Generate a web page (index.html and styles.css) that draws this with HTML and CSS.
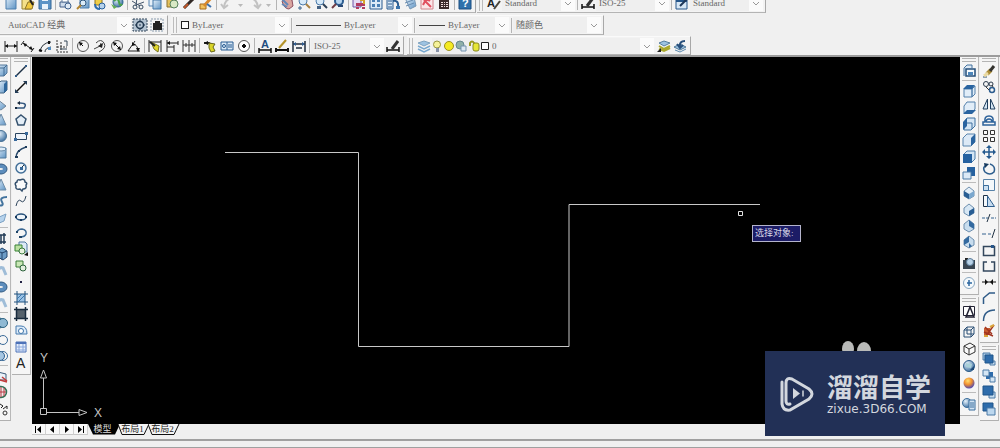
FILE: index.html
```html
<!DOCTYPE html>
<html lang="zh-CN">
<head>
<meta charset="utf-8">
<title>AutoCAD 经典</title>
<link rel="stylesheet" href="styles.css">
</head>
<body>
<svg class="defs" aria-hidden="true">
<defs>
<linearGradient id="gb" x1="0" y1="0" x2="1" y2="1"><stop offset="0" stop-color="#e4f0fa"/><stop offset="1" stop-color="#5d93c4"/></linearGradient>
<linearGradient id="gd" x1="0" y1="0" x2="1" y2="1"><stop offset="0" stop-color="#5f9acb"/><stop offset="1" stop-color="#1d4f83"/></linearGradient>
<radialGradient id="go" cx=".4" cy=".3" r=".7"><stop offset="0" stop-color="#ffe070"/><stop offset=".5" stop-color="#f09030"/><stop offset="1" stop-color="#5048b0"/></radialGradient>
<radialGradient id="gs" cx=".35" cy=".3" r=".8"><stop offset="0" stop-color="#e6f2fb"/><stop offset="1" stop-color="#30669a"/></radialGradient>
<!-- standard toolbar -->
<g id="new"><path d="M3 1h10v13H3z" fill="url(#gb)" stroke="#4d7fae"/></g>
<g id="open"><path d="M2 4h9v10H2z" fill="#f4e08a" stroke="#9a8430"/><path d="M5 14l3-7h6l-2 7z" fill="#f0c840" stroke="#8b7325"/><path d="M10 5l3 5" stroke="#222" stroke-width="2"/></g>
<g id="save"><path d="M2 1h12v13H2z" fill="#5b93c6" stroke="#356796"/><path d="M5 9h6v5H5zM5 2h6v4H5z" fill="#e9f2fa"/></g>
<g id="plot"><path d="M2 7h9v5H2z" fill="#cfdcec" stroke="#44608a"/><circle cx="10" cy="11" r="3" fill="#dfe9f4" stroke="#3d5f8c"/><path d="M4 3h6v4H4z" fill="#fff" stroke="#607a9c"/></g>
<g id="preview"><path d="M5 2h9v11H5z" fill="url(#gb)" stroke="#4d7fae"/><circle cx="8" cy="8" r="3" fill="#dcecf8" stroke="#31587f"/><path d="M6 10l-4 4" stroke="#b48530" stroke-width="2"/></g>
<g id="publish"><path d="M3 4h7v6H3z" fill="#f0cf48" stroke="#8c7424"/><circle cx="10" cy="11" r="3" fill="#b8d3ec" stroke="#28609c"/><path d="M3 9q0 5 5 5" fill="none" stroke="#2e6db0" stroke-width="2"/></g>
<g id="globe"><circle cx="9" cy="7" r="5" fill="url(#gs)" stroke="#2e6490"/><path d="M5 6q4-4 5 1t3 2" fill="none" stroke="#49a24a" stroke-width="2"/><path d="M2 9l3 5 3-2" fill="#63ad54"/></g>
<g id="cut"><path d="M2 6l8 5M14 7l-8 3M7 2l-1 9" stroke="#44566c" fill="none"/><circle cx="5" cy="12" r="2" fill="none" stroke="#33485f"/><circle cx="11" cy="12" r="2" fill="none" stroke="#33485f"/></g>
<g id="copyc"><path d="M2 2h8v9H2z" fill="#e6f0f9" stroke="#5884b0"/><path d="M6 5h8v9H6z" fill="url(#gb)" stroke="#4578a8"/></g>
<g id="paste"><path d="M3 3h9v9H3z" fill="#e5c05c" stroke="#8a7030"/><circle cx="10" cy="9" r="4" fill="#d8e8c4" stroke="#56825c"/></g>
<g id="brush"><path d="M3 13l6-6 5-5" stroke="#312926" stroke-width="3"/><path d="M3 13l4-4" stroke="#c05628" stroke-width="2"/></g>
<g id="blockedit"><path d="M2 9h6v5H2z" fill="#f2c15c" stroke="#a56b1c"/><path d="M6 11l7-8" stroke="#d8892c" stroke-width="3"/><path d="M9 9l4 3" stroke="#3c70ac" stroke-width="2"/></g>
<g id="undo"><path d="M13 3Q6 4 5 12M2 9l3 4 4-3" fill="none" stroke="#c2c2c2" stroke-width="2"/></g>
<g id="redo"><path d="M3 3q7 1 8 9M14 9l-3 4-4-3" fill="none" stroke="#c2c2c2" stroke-width="2"/></g>
<g id="dd"><path d="M5 9h5l-2.500 3z" fill="#b9b9b9"/></g>
<g id="pan"><path d="M3 6q2 8 7 8l4-3-1-6-6-2z" fill="#d9a5a0" stroke="#8e5060"/><path d="M3 4l6 6M3 9l5 3" stroke="#6287b8" stroke-width="2"/></g>
<g id="zoomr"><circle cx="7" cy="6" r="4" fill="#d8eaf8" stroke="#4a7aaa"/><path d="M10 9l4 4" stroke="#a88040" stroke-width="2"/><path d="M2 13h4M4 11v4" stroke="#38638e"/></g>
<g id="zoomw"><circle cx="7" cy="6" r="4" fill="#d8eaf8" stroke="#4a7aaa"/><path d="M10 9l4 4" stroke="#2c3f55" stroke-width="2"/><path d="M4 11h4v3H4z" fill="#456384"/></g>
<g id="zoomp"><circle cx="9" cy="6" r="4" fill="#b7d5ef" stroke="#2f5f92" stroke-width="2"/><path d="M6 9l-4 4" stroke="#713c44" stroke-width="2"/><path d="M8 11h5" stroke="#2b4a74" stroke-width="2"/></g>
<g id="props"><path d="M2 3h8v9H2z" fill="#e4daf4" stroke="#6f58a8"/><path d="M5 8h9v3H5zM5 12h3v2H5zM11 12h3v2h-3z" fill="#b13c61"/><path d="M9 5h4v4" stroke="#d6a22c" fill="none" stroke-width="2"/></g>
<g id="dcenter"><path d="M2 2h12v12H2z" fill="#dceaf7" stroke="#2c5c90"/><path d="M4 4h3v3H4zM9 4h3v3H9zM4 9h3v3H4zM9 9h3v3H9z" fill="#4a7fb4"/></g>
<g id="palettes"><path d="M2 2h6v12H2z" fill="#d4e5f5" stroke="#2c5c90"/><path d="M3 6h4M3 9h4M3 12h4" stroke="#2c5c90"/><path d="M8 6q6-1 5 6" fill="none" stroke="#2b5c90" stroke-width="2"/><path d="M11 11h4v3h-4z" fill="#3a72aa"/></g>
<g id="sheet"><path d="M4 5l8-3 2 9-6 3z" fill="url(#gb)" stroke="#7897b4"/><path d="M3 8l8-3M4 11l8-3" stroke="#688cb0"/></g>
<g id="markup"><path d="M2 2h12v12H2z" fill="#fbe6e8" stroke="#d0848c"/><path d="M4 10q3-7 7-4M5 5l7 7" fill="none" stroke="#e05060" stroke-width="2"/></g>
<g id="calc"><path d="M3 1h10v13H3z" fill="#3d2e2e"/><path d="M5 7h2v1H5zM8 7h1v1H8zM10 7h2v1h-2zM5 9h2v1H5zM8 9h1v1H8zM10 9h2v1h-2zM5 11h2v1H5zM8 11h1v1H8zM10 11h2v1h-2z" fill="#f0dede"/><path d="M5 3h6v2H5z" fill="#a65050"/></g>
<g id="help"><path d="M2 1h12v13H2z" fill="#2e71ab" stroke="#1c4f80"/><text x="5" y="12" class="glyph white">?</text></g>
<g id="tstyle"><text x="1" y="12" class="glyph">A</text><path d="M8 14l6-8" stroke="#4a4438" stroke-width="2"/></g>
<g id="dstyle"><path d="M2 12h12M2 9v5M14 9v5" stroke="#111" stroke-width="1.500"/><path d="M7 11l6-8" stroke="#333" stroke-width="3"/></g>
<g id="tbstyle"><path d="M2 4h11v10H2z" fill="#d7e7f5" stroke="#26568a"/><path d="M2 6h11" stroke="#26568a" stroke-width="2"/><path d="M6 11l8-8" stroke="#1f3858" stroke-width="2"/></g>
<!-- workspace -->
<g id="gear"><path d="M1 2h14v12H1z" fill="#b5c4d2"/><path d="M1 2h14v12H1z" fill="none" stroke="#33465a" stroke-dasharray="2 1"/><circle cx="8" cy="8" r="3.500" fill="none" stroke="#20374e" stroke-width="1.500"/><path d="M8 3v2M8 11v2M3 8h2M11 8h2M7 8h2" stroke="#20374e"/></g>
<g id="wsave"><path d="M2 2h12v12H2z" fill="none" stroke="#899bad" stroke-dasharray="2 1"/><path d="M4 6h9v7H4zM6 4h5v3H6z" fill="#222"/></g>
<!-- dimensions -->
<g id="dlin"><path d="M2 3v11M14 3v11M2 8h12" stroke="#222" fill="none"/><path d="M2 8l3-2v4zM14 8l-3-2v4z" fill="#111"/></g>
<g id="dali"><path d="M3 5l10 7M1 7l3-4M11 14l3-4" stroke="#222"/><path d="M3 5l4 1-2 3zM13 12l-4-1 2-3z" fill="#111"/></g>
<g id="darc"><path d="M3 14q1-9 11-10M8 14q0-4 6-5" stroke="#29323a" fill="none"/><path d="M2 12l3 1M12 3v3" stroke="#111" stroke-width="2"/><path d="M11 9h3v3h-3z" fill="#538dc0"/></g>
<g id="dord"><path d="M3 2v12h11M7 4v9M3 9h10" stroke="#333" fill="none" stroke-dasharray="2 1"/><path d="M10 3h3v5M6 11h7" stroke="#345" fill="none"/></g>
<g id="drad"><circle cx="8" cy="8" r="5.500" fill="none" stroke="#555"/><path d="M8 8L4 4" stroke="#111"/><path d="M4 4l4 1-3 3z" fill="#111"/></g>
<g id="djog"><path d="M4 5q5-5 8 0t-5 9M2 11l6-3 1-3" stroke="#444" fill="none"/><path d="M6 8l5-3-1 5z" fill="#222"/></g>
<g id="ddia"><circle cx="8" cy="8" r="5.500" fill="none" stroke="#555"/><path d="M4 4l8 8" stroke="#111"/><path d="M4 4l4 1-3 3zM12 12l-4-1 3-3z" fill="#111"/></g>
<g id="dang"><path d="M14 13H2L9 3M7 6q5 1 5 7" stroke="#222" fill="none"/><path d="M6 4l4 3-4 1zM10 10l2 4 2-4z" fill="#111"/></g>
<g id="dqui"><path d="M2 2v12M14 2v12M2 4h12" stroke="#222"/><path d="M4 4l8 4-1 6-4-3z" fill="#e3d92a" stroke="#77711b"/><path d="M3 4l5 4" stroke="#222" stroke-width="2"/></g>
<g id="dbas"><path d="M3 2v12M3 5h11M3 9h7M14 3v4M10 7v7" stroke="#222"/><path d="M3 5l3-2v4z" fill="#111"/></g>
<g id="dcon"><path d="M2 2v12M8 2v12M14 2v12M2 7h12" stroke="#333"/><path d="M5 5v4M11 5v4" stroke="#333"/></g>
<g id="dled"><path d="M2 5h5l4 3" stroke="#222" stroke-width="2" fill="none"/><path d="M7 5l6 1-2 3 2 4-4 1-2-4z" fill="#d9d428" stroke="#66661a"/><path d="M2 5l4-2v4z" fill="#111"/></g>
<g id="dtol"><path d="M2 4h12v8H2zM8 4v8" fill="#d8e8f6" stroke="#285c92"/><circle cx="5" cy="8" r="1.500" fill="none" stroke="#24588f"/><path d="M10 10V6M12 6v4" stroke="#24588f"/></g>
<g id="dcen"><circle cx="8" cy="8" r="5.500" fill="#fff" stroke="#555"/><path d="M6 8h4M8 6v4" stroke="#111" stroke-width="2"/></g>
<g id="dedit"><text x="4" y="10" class="glyph blue">A</text><path d="M2 12h12M2 10v5M14 10v5" stroke="#111" stroke-width="1.500"/></g>
<g id="dtedit"><path d="M2 12h12M2 10v4M14 10v4" stroke="#111" stroke-width="2"/><path d="M5 10l7-8" stroke="#b39228" stroke-width="2"/></g>
<g id="dupd"><path d="M2 3v11M14 3v11M2 6h12M5 10h6" stroke="#202c3c" stroke-width="1.500"/><path d="M2 6l3-2v4zM14 6l-3-2v4z" fill="#315e91"/></g>
<!-- layers -->
<g id="layers"><path d="M2 5l6-2 6 2-6 3z" fill="#9dc3e2" stroke="#7fa3c0"/><path d="M2 8l6 3 6-3M2 11l6 3 6-3" fill="none" stroke="#78a8cf" stroke-width="1.500"/></g>
<g id="laycur"><path d="M4 5l5-2 6 2-6 3z" fill="#9dc3e2" stroke="#557f9f"/><path d="M4 8l5 3 6-3M4 11l5 2 6-3" fill="none" stroke="#aaa82c" stroke-width="2"/><path d="M2 14l4-4v4z" fill="#222"/></g>
<g id="layprev"><path d="M2 9l6-3 6 3-6 3z" fill="#9dc3e2" stroke="#4f7897"/><path d="M3 12l5 2 6-3" fill="none" stroke="#5b89ae"/><path d="M13 3q-6 0-5 6M5 6l3 4 3-3" stroke="#284f7b" stroke-width="2" fill="none"/></g>
<!-- drawing -->
<g id="line"><path d="M3 13L13 3" stroke="#1b2f45" stroke-width="1.500"/><path d="M2 12h2v2H2zM12 2h2v2h-2z" fill="#315b87"/></g>
<g id="xline"><path d="M3 13L13 3" stroke="#111" stroke-width="1.500"/><path d="M2 14v-4l4 4zM14 2v4l-4-4z" fill="#223c57"/></g>
<g id="pline"><path d="M3 12h8q4-5-4-5M3 12h2" stroke="#365980" stroke-width="1.500" fill="none"/><path d="M7 5v4L4 7zM2 11h2v2H2z" fill="#16283c"/></g>
<g id="poly"><path d="M8 3l5 4-2 6H5L3 7z" fill="#e4eef7" stroke="#36536f" stroke-width="1.500"/></g>
<g id="rect"><path d="M2.500 5.500h11v6h-11z" fill="#edf3fa" stroke="#29435f"/><path d="M12 4h3v3h-3zM1 10h3v3H1z" fill="#38699c"/></g>
<g id="arc"><path d="M3 14q0-8 10-11" stroke="#294a6c" fill="none" stroke-width="1.500"/><path d="M2 12h3v2H2zM12 2h2v2h-2zM5 6h2v2H5z" fill="#1e3b5a"/></g>
<g id="circle"><circle cx="8" cy="8" r="5" fill="#eef5fb" stroke="#426f98" stroke-width="1.500"/><path d="M8 8l3-3" stroke="#234"/><path d="M7 7h3v3H7z" fill="#37699a"/></g>
<g id="cloud"><path d="M4 5q0-3 3-2 5-2 5 2 3 1 1 3 1 4-3 4l-1 2-2-2q-5 1-4-3-2-3 1-4z" fill="#fafafa" stroke="#334f6c" stroke-width="1.500"/></g>
<g id="spline"><path d="M3 13q2-8 5-5t5-5" fill="none" stroke="#2c435a"/></g>
<g id="ell"><ellipse cx="8" cy="8" rx="5" ry="3" fill="#eff5fa" stroke="#29537c" stroke-width="1.500"/><path d="M2 7h2v2H2zM12 7h2v2h-2zM7 10h2v2H7z" fill="#1a3b5f"/></g>
<g id="ellarc"><path d="M4 7q1-3 5-3 5 1 4 5-1 3-6 3" fill="none" stroke="#3a6792" stroke-width="1.500"/><path d="M3 6h2v2H3zM6 11h3v2H6z" fill="#1e4467"/></g>
<g id="insert"><path d="M6 1h6l2 2v8H6z" fill="#dce9f6" stroke="#5079a0"/><path d="M2 4h7v6H2z" fill="#bce1a3" stroke="#398334"/><circle cx="9" cy="10" r="3" fill="#e8f2df" stroke="#3a7a3d"/><path d="M11 14l4-3v4z" fill="#111"/></g>
<g id="block"><path d="M3 3h7v6H3z" fill="#c9e7b6" stroke="#3a7d38"/><circle cx="10" cy="10" r="3" fill="#e3efdf" stroke="#2d633c"/></g>
<g id="point"><path d="M7 7h2v2H7z" fill="#224"/></g>
<g id="hatch"><path d="M4 4h8v8H4z" fill="#9bc2e5"/><path d="M4 1v14M12 1v14M1 4h14M1 12h14" stroke="#23527f"/><path d="M4 9l5-5M5 12l7-7" stroke="#3d78ad"/></g>
<g id="grad"><path d="M4 4h8v8H4z" fill="#55616b"/><path d="M3.500 1v14M12.500 1v14M1 3.500h14M1 12.500h14" stroke="#182b3d" stroke-width="1.500"/></g>
<g id="region"><path d="M3 12V4h5q6 0 6 8z" fill="#dceaf8" stroke="#477aae"/><circle cx="8" cy="9" r="2.500" fill="#fff" stroke="#3c73a9"/></g>
<g id="table"><path d="M3 3h10v10H3z" fill="#e6eefb" stroke="#4d72b8"/><path d="M3 4h10" stroke="#4d72b8" stroke-width="2"/><path d="M3 8h10M3 11h10M6 5v8M10 5v8" stroke="#8ba8dc"/></g>
<g id="mtext"><text x="3" y="13" class="letter">A</text></g>
<!-- solids -->
<g id="cube"><path d="M3 5l4-3h7v8l-3 3H3z" fill="url(#gb)" stroke="#55799b"/><path d="M3 5h8v8M11 5l3-3" fill="none" stroke="#426c94"/></g>
<g id="box"><path d="M5 5l3-3h6v9l-3 3H5z" fill="url(#gb)" stroke="#436787"/><path d="M11 5l3-3v9l-3 3z" fill="#2f679c"/></g>
<g id="wedge"><path d="M4 3l9 7-5 4-6-3z" fill="url(#gb)" stroke="#71869b"/></g>
<g id="cone"><path d="M8 2l5 11H4z" fill="url(#gb)" stroke="#6d8ba6"/></g>
<g id="sphere"><circle cx="8" cy="8" r="5.500" fill="url(#gs)" stroke="#4b7396"/></g>
<g id="cyl"><path d="M4 3h9v10H4z" fill="url(#gb)" stroke="#4f789d"/><ellipse cx="8" cy="4" rx="5" ry="2" fill="#dcebf8" stroke="#6287a8"/></g>
<g id="torus"><ellipse cx="8" cy="8" rx="6" ry="5" fill="#5d8dbc" stroke="#335b82"/><ellipse cx="8" cy="8" rx="2" ry="1" fill="#eee"/></g>
<g id="helix"><path d="M3 12q9 2 6-3t5-5" fill="none" stroke="#44749e" stroke-width="2"/></g>
<g id="plane"><path d="M4 8l9-4-2 7-7 3z" fill="#b7d3ec" stroke="#7ba0c3"/></g>
<g id="extr"><path d="M3 5h10M5 3v11M11 3v11M8 5v9M3 12h10" stroke="#223b55" stroke-width="1.500"/></g>
<g id="push"><path d="M5 5l4-3 5 3v6l-4 3-5-3z" fill="#6c9cc6" stroke="#26486e"/><path d="M9 6v8M5 5l4 2 5-2" fill="none" stroke="#26486e"/></g>
<g id="sweep"><path d="M3 12q2-9 7-7l3 7" fill="none" stroke="#9fbdd8" stroke-width="3"/></g>
<g id="union"><circle cx="6" cy="8" r="5" fill="#76a6c0" stroke="#2d6382"/><circle cx="10" cy="8" r="4.500" fill="#8fb9d4" stroke="#2d6382"/></g>
<g id="subt"><circle cx="5" cy="8" r="4.500" fill="#6b9cc4" stroke="#2d5a86"/><circle cx="10" cy="8" r="4.500" fill="#f5f5f5" stroke="#3a6a98"/></g>
<g id="inter"><circle cx="10" cy="8" r="4.500" fill="#f5f5f5" stroke="#3a6a98"/><circle cx="7" cy="8" r="4.500" fill="#a6c6e2" stroke="#2f608f"/></g>
<g id="rot3"><path d="M5 4l8 2v6H5z" fill="#e9f1f8" stroke="#3c5c7c"/><path d="M7 12l7 2M9 9l5 4" stroke="#c23a3a" stroke-width="1.500"/></g>
<g id="orb"><circle cx="8" cy="8" r="5.500" fill="#f1e8e8" stroke="#347055" stroke-width="1.500"/><path d="M8 3v10M3 8h10M11 4v8" stroke="#b63a45"/></g>
<g id="walk"><path d="M7 3l3 2-2 2M10 8l4-3v3" stroke="#222" fill="none"/><circle cx="12" cy="12" r="2" fill="none" stroke="#333"/></g>
<!-- views -->
<g id="named"><path d="M3 13V5l3-3h5v3" fill="#dce9f5" stroke="#44739f"/><path d="M5 6h9v7H5z" fill="#f6fafd" stroke="#234e79" stroke-width="1.500"/><path d="M7 9h5v3H7z" fill="#4c86bb"/></g>
<g id="vtop"><path d="M3 6h8v8H3zM11 6l3-3v8l-3 3z" fill="#e1edf8" stroke="#5481ac"/><path d="M2 6l4-4h8l-3 4z" fill="#2a64a0"/></g>
<g id="vbot"><path d="M3 6l3-4h8v7l-3 4H3z" fill="#e1edf8" stroke="#5481ac"/><path d="M2 14l4-4h9l-4 4z" fill="#2a64a0"/></g>
<g id="vleft"><path d="M3 6l3-4h8v8l-4 4H3z" fill="#d4e5f4" stroke="#3f719f"/><path d="M2 6l4-4v8l-4 4z" fill="#2a64a0"/><path d="M6 7h5v6" fill="none" stroke="#3f719f"/></g>
<g id="vright"><path d="M2 6l4-4h8v8l-4 4H2z" fill="#dce9f6" stroke="#5984ad"/><path d="M10 6l4-4v8l-4 4z" fill="#2a64a0"/></g>
<g id="vfront"><path d="M3 5l3-3h8v8l-3 3z" fill="#d4e5f4" stroke="#4e7eaa"/><path d="M2 5h9v9H2z" fill="#2561a0"/></g>
<g id="vback"><path d="M6 2h8v9H6z" fill="#2561a0"/><path d="M2 7h8v7H2z" fill="#dbe9f6" stroke="#4b7aa7"/></g>
<g id="isw"><path d="M8 2l5 4v5l-5 3-5-3V6z" fill="#e4eff8" stroke="#6e8fae"/><path d="M3 6l5 3v5l-5-3z" fill="#285d93"/><path d="M8 9l5-3v5l-5 3z" fill="#7ba8cf"/></g>
<g id="ise"><path d="M8 2l5 4v5l-5 3-5-3V6z" fill="#d7e7f4" stroke="#6e8fae"/><path d="M8 9l5-3v5l-5 3z" fill="#285d93"/></g>
<g id="ine"><path d="M8 2l5 4v5l-5 3-5-3V6z" fill="#c8ddee" stroke="#6e8fae"/><path d="M8 2l5 4v5l-5-3z" fill="#336aa0"/></g>
<g id="inw"><path d="M8 2l5 4v5l-5 3-5-3V6z" fill="#c8ddee" stroke="#6e8fae"/><path d="M8 2L3 6v5l5-3zM8 9l3 3-3 2z" fill="#336aa0"/></g>
<g id="cam"><path d="M2 5h12v9H2z" fill="#394652"/><path d="M4 3h3v2H4z" fill="#222"/><circle cx="9" cy="7" r="3.500" fill="#b9d3e8" stroke="#597996"/></g>
<g id="pivot"><circle cx="8" cy="8" r="5.500" fill="#f5fafd" stroke="#88a6bf"/><path d="M6 8h5M8 5v6" stroke="#2b67a0" stroke-width="1.500"/></g>
<g id="vs2d"><path d="M2.500 3.500h11v9h-11z" fill="#fff" stroke="#223"/><path d="M9 4l4 10H5z" fill="none" stroke="#223" stroke-width="1.500"/></g>
<g id="wire"><path d="M3 6h7v7H3zM6 3h7v7h-7zM3 6l3-3M10 6l3-3M10 13l3-3" fill="none" stroke="#294e75"/></g>
<g id="hid"><path d="M3 5l6-3 5 3v6l-6 3-5-3zM3 5l5 3 6-3M8 8v6" fill="#fafafa" stroke="#333"/></g>
<g id="real"><circle cx="8" cy="8" r="5.500" fill="url(#gs)" stroke="#2b5b88"/><path d="M5 5l6 1-1 4-5-1z" fill="#a9d0d8"/><path d="M9 12l4-4v4z" fill="#1e4a78"/></g>
<g id="concept"><circle cx="8" cy="8" r="5.500" fill="url(#go)"/></g>
<g id="vsman"><circle cx="6" cy="7" r="4.500" fill="url(#gs)" stroke="#3c6f9d"/><path d="M8 4h6v10H8z" fill="#d2e4f4" stroke="#3b6e9d"/><path d="M9 7h4M9 9h4M9 11h4" stroke="#3b6e9d"/></g>
<!-- modify -->
<g id="erase"><path d="M2 14h4" stroke="#2b4f76"/><path d="M6 11l4-4" stroke="#ab8c36" stroke-width="4"/><path d="M9 8l4-5" stroke="#34332f" stroke-width="3"/><path d="M3 13l4-3" stroke="#ead9a0" stroke-width="3"/></g>
<g id="copy"><circle cx="5" cy="5" r="2.500" fill="none" stroke="#2b3b4c"/><circle cx="10" cy="5" r="2" fill="none" stroke="#2b3b4c"/><circle cx="11" cy="11" r="2.500" fill="none" stroke="#2c5d8f" stroke-width="1.500"/><path d="M5 8l3 3M12 8l-1-2" stroke="#333"/></g>
<g id="mirror"><path d="M6.500 3v10H2zM9.500 3v10H14z" fill="#d6e7f5" stroke="#1f3e5d"/></g>
<g id="offset"><path d="M2 13h12v-3h-2q1-6-4-6T4 10H2zM5 10h6q0-3-3-3t-3 3" fill="none" stroke="#2e639b" stroke-width="1.500"/></g>
<g id="array"><path d="M2.500 2.500h4v4h-4zM9.500 2.500h4v4h-4zM2.500 9.500h4v4h-4zM9.500 9.500h4v4h-4z" fill="#fafafa" stroke="#333"/></g>
<g id="move"><path d="M8 3v10M3 8h10" stroke="#255a8e" stroke-width="1.500"/><path d="M8 1l3 3H5zM8 15l3-3H5zM1 8l3-3v6zM15 8l-3-3v6z" fill="#255a8e"/></g>
<g id="rotate"><path d="M5 4q-4 3-1 7 5 4 9 0 2-6-4-8" fill="none" stroke="#2d5e8e" stroke-width="1.500"/><path d="M3 2l5 1-4 4z" fill="#173b5e"/></g>
<g id="scale"><path d="M2.500 2.500h11v11h-11z" fill="#f4f8fb" stroke="#5782a8"/><path d="M2.500 8.500h5v5h-5z" fill="#cbdff0" stroke="#3b6d9c"/></g>
<g id="stretch"><path d="M2.500 13.500v-11h4v11z" fill="#f4f8fb" stroke="#1e3146"/><path d="M6.500 3l7 10.500h-7z" fill="#c6dcf0" stroke="#2f5f8f"/></g>
<g id="trim"><path d="M1 9h6M10 9h5" stroke="#35638f" stroke-dasharray="3 1"/><path d="M6 13l3-8" stroke="#234"/></g>
<g id="extend"><path d="M1 9h4M7 9h3" stroke="#35638f"/><path d="M11 13l3-9" stroke="#234"/></g>
<g id="breakp"><path d="M2.500 4.500h11v9h-11z" fill="#f5f5f5" stroke="#33475d" stroke-width="1.500"/><path d="M10 3h3v3h-3z" fill="#28568a"/></g>
<g id="break"><path d="M6 4H2.500v9h11V4H10" fill="none" stroke="#33475d" stroke-width="1.500"/></g>
<g id="join"><path d="M1 8h14" stroke="#111"/><path d="M7 8L4 5v6zM9 8l3-3v6z" fill="#111"/></g>
<g id="chamfer"><path d="M2.500 14V8l6-5H14" fill="none" stroke="#2f5b88" stroke-width="1.500"/></g>
<g id="fillet"><path d="M2.500 14q0-11 11.500-11" fill="none" stroke="#2f5b88" stroke-width="1.500"/></g>
<g id="explode"><path d="M3 5h6v7H3z" fill="#c85c30"/><path d="M5 13l8-11M3 9l9 4M4 4l7 7" stroke="#a03420" stroke-width="1.500"/><path d="M9 4l4-2M3 13h4" stroke="#d9a53c" stroke-width="2"/></g>
<g id="front"><path d="M2 2h7v7H2z" fill="#a9cae6" stroke="#4c7ba6"/><path d="M9 10h5v4H9z" fill="#c7ddef" stroke="#4c7ba6"/><path d="M4 4h8v8H4z" fill="#2e6cab" stroke="#1f548a"/></g>
<g id="back"><path d="M5 4h7v7H5z" fill="#2e6cab"/><path d="M2 2h6v6H2zM9 9h5v5H9z" fill="#d5e6f4" stroke="#4c7ba6"/></g>
<g id="above"><path d="M8 8h6v6H8z" fill="#c7ddef" stroke="#4c7ba6"/><path d="M2 2h10v9H2z" fill="#2e6cab" stroke="#1f548a"/></g>
<g id="under"><path d="M2 2h10v8H2z" fill="#2e6cab" stroke="#1f548a"/><path d="M6 7h8v7H6z" fill="#bcd7ee" stroke="#4c7ba6"/></g>
</defs>
</svg>

<header class="bars">
  <div class="row row-standard">
    <div class="bar" role="toolbar" aria-label="标准">
      <button class="b" aria-label="新建"><svg><use href="#new"/></svg></button>
      <button class="b" aria-label="打开"><svg><use href="#open"/></svg></button>
      <button class="b" aria-label="保存"><svg><use href="#save"/></svg></button>
      <i class="sep"></i>
      <button class="b" aria-label="打印"><svg><use href="#plot"/></svg></button>
      <button class="b" aria-label="打印预览"><svg><use href="#preview"/></svg></button>
      <button class="b" aria-label="发布"><svg><use href="#publish"/></svg></button>
      <button class="b" aria-label="三维DWF"><svg><use href="#globe"/></svg></button>
      <i class="sep"></i>
      <button class="b" aria-label="剪切"><svg><use href="#cut"/></svg></button>
      <button class="b" aria-label="复制"><svg><use href="#copyc"/></svg></button>
      <button class="b" aria-label="粘贴"><svg><use href="#paste"/></svg></button>
      <button class="b" aria-label="特性匹配"><svg><use href="#brush"/></svg></button>
      <button class="b" aria-label="块编辑器"><svg><use href="#blockedit"/></svg></button>
      <i class="sep"></i>
      <button class="b" aria-label="放弃"><svg><use href="#undo"/></svg></button>
      <button class="b slim" aria-label="放弃列表"><svg><use href="#dd"/></svg></button>
      <button class="b" aria-label="重做"><svg><use href="#redo"/></svg></button>
      <button class="b slim" aria-label="重做列表"><svg><use href="#dd"/></svg></button>
      <i class="sep"></i>
      <button class="b" aria-label="平移"><svg><use href="#pan"/></svg></button>
      <button class="b" aria-label="实时缩放"><svg><use href="#zoomr"/></svg></button>
      <button class="b" aria-label="窗口缩放"><svg><use href="#zoomw"/></svg></button>
      <button class="b" aria-label="缩放上一个"><svg><use href="#zoomp"/></svg></button>
      <i class="sep"></i>
      <button class="b" aria-label="特性"><svg><use href="#props"/></svg></button>
      <button class="b" aria-label="设计中心"><svg><use href="#dcenter"/></svg></button>
      <button class="b" aria-label="工具选项板"><svg><use href="#palettes"/></svg></button>
      <button class="b" aria-label="图纸集"><svg><use href="#sheet"/></svg></button>
      <button class="b" aria-label="标记集"><svg><use href="#markup"/></svg></button>
      <button class="b" aria-label="计算器"><svg><use href="#calc"/></svg></button>
      <i class="sep"></i>
      <button class="b" aria-label="帮助"><svg><use href="#help"/></svg></button>
    </div>
    <div class="bar" role="toolbar" aria-label="样式">
      <i class="grip"></i>
      <button class="b" aria-label="文字样式"><svg><use href="#tstyle"/></svg></button>
      <div class="combo w-style"><select aria-label="文字样式"><option>Standard</option></select><svg class="chev" viewBox="0 0 14 16"><path d="M4 7l3 3 3-3"/></svg></div>
      <i class="sep"></i>
      <button class="b" aria-label="标注样式"><svg><use href="#dstyle"/></svg></button>
      <div class="combo w-style"><select aria-label="标注样式"><option>ISO-25</option></select><svg class="chev" viewBox="0 0 14 16"><path d="M4 7l3 3 3-3"/></svg></div>
      <i class="sep"></i>
      <button class="b" aria-label="表格样式"><svg><use href="#tbstyle"/></svg></button>
      <div class="combo w-style"><select aria-label="表格样式"><option>Standard</option></select><svg class="chev" viewBox="0 0 14 16"><path d="M4 7l3 3 3-3"/></svg></div>
    </div>
  </div>

  <div class="row row-props">
    <div class="bar" role="toolbar" aria-label="工作空间">
      <div class="combo w-space"><select aria-label="工作空间"><option>AutoCAD 经典</option></select><svg class="chev" viewBox="0 0 14 16"><path d="M4 7l3 3 3-3"/></svg></div>
      <button class="b" aria-label="工作空间设置"><svg><use href="#gear"/></svg></button>
      <button class="b" aria-label="我的工作空间"><svg><use href="#wsave"/></svg></button>
    </div>
    <div class="bar" role="toolbar" aria-label="特性">
      <i class="grip"></i>
      <div class="combo w-color"><span class="swatch"></span><select aria-label="颜色"><option>ByLayer</option></select><svg class="chev" viewBox="0 0 14 16"><path d="M4 7l3 3 3-3"/></svg></div>
      <i class="sep"></i>
      <div class="combo w-ltype"><span class="dash"></span><select aria-label="线型"><option>ByLayer</option></select><svg class="chev" viewBox="0 0 14 16"><path d="M4 7l3 3 3-3"/></svg></div>
      <i class="sep"></i>
      <div class="combo w-weight"><span class="dash short"></span><select aria-label="线宽"><option>ByLayer</option></select><svg class="chev" viewBox="0 0 14 16"><path d="M4 7l3 3 3-3"/></svg></div>
      <i class="sep"></i>
      <div class="combo w-plot"><select aria-label="打印样式"><option>随颜色</option></select><svg class="chev" viewBox="0 0 14 16"><path d="M4 7l3 3 3-3"/></svg></div>
    </div>
  </div>

  <div class="row row-dim">
    <div class="bar" role="toolbar" aria-label="标注">
      <button class="b" aria-label="线性"><svg><use href="#dlin"/></svg></button>
      <button class="b" aria-label="对齐"><svg><use href="#dali"/></svg></button>
      <button class="b" aria-label="弧长"><svg><use href="#darc"/></svg></button>
      <button class="b" aria-label="坐标"><svg><use href="#dord"/></svg></button>
      <i class="sep"></i>
      <button class="b" aria-label="半径"><svg><use href="#drad"/></svg></button>
      <button class="b" aria-label="折弯"><svg><use href="#djog"/></svg></button>
      <button class="b" aria-label="直径"><svg><use href="#ddia"/></svg></button>
      <button class="b" aria-label="角度"><svg><use href="#dang"/></svg></button>
      <i class="sep"></i>
      <button class="b" aria-label="快速标注"><svg><use href="#dqui"/></svg></button>
      <button class="b" aria-label="基线"><svg><use href="#dbas"/></svg></button>
      <button class="b" aria-label="连续"><svg><use href="#dcon"/></svg></button>
      <i class="sep"></i>
      <button class="b" aria-label="引线"><svg><use href="#dled"/></svg></button>
      <button class="b" aria-label="公差"><svg><use href="#dtol"/></svg></button>
      <button class="b" aria-label="圆心标记"><svg><use href="#dcen"/></svg></button>
      <i class="sep"></i>
      <button class="b" aria-label="编辑标注"><svg><use href="#dedit"/></svg></button>
      <button class="b" aria-label="编辑标注文字"><svg><use href="#dtedit"/></svg></button>
      <button class="b" aria-label="标注更新"><svg><use href="#dupd"/></svg></button>
      <i class="sep"></i>
      <div class="combo w-style"><select aria-label="当前标注样式"><option>ISO-25</option></select><svg class="chev" viewBox="0 0 14 16"><path d="M4 7l3 3 3-3"/></svg></div>
      <button class="b" aria-label="标注样式管理"><svg><use href="#dstyle"/></svg></button>
    </div>
    <div class="bar" role="toolbar" aria-label="图层">
      <i class="grip"></i>
      <button class="b" aria-label="图层特性"><svg><use href="#layers"/></svg></button>
      <div class="combo w-layer">
        <svg class="states" width="58" height="14" viewBox="0 0 58 14">
          <circle cx="5" cy="5.500" r="3.500" fill="#f6f29a" stroke="#9a9740"/><path d="M4 9h3v4H4z" fill="#8792a8"/>
          <circle cx="17" cy="7" r="4.500" fill="#f5ea23" stroke="#9b8f20"/>
          <circle cx="28" cy="6" r="4" fill="#8fb0a8" stroke="#668890"/><path d="M29 7h5v5h-5z" fill="#dce8f2" stroke="#7593ad"/>
          <path d="M38 7V4q2-3 4 0v2" fill="none" stroke="#9a9a20" stroke-width="2"/><rect x="41" y="4" width="6" height="8" rx="2" fill="#e6e637" stroke="#89891e"/>
          <path d="M49.500 3.500h7v7h-7z" fill="#fff" stroke="#222"/>
        </svg>
        <select aria-label="当前图层"><option>0</option></select><svg class="chev" viewBox="0 0 14 16"><path d="M4 7l3 3 3-3"/></svg>
      </div>
      <button class="b" aria-label="置为当前"><svg><use href="#laycur"/></svg></button>
      <button class="b" aria-label="上一个图层"><svg><use href="#layprev"/></svg></button>
    </div>
  </div>
</header>

<main class="work">
  <div class="side side-solids">
    <div class="palette tall" role="toolbar" aria-label="建模">
      <i class="hgrip"></i>
      <button class="b" aria-label="多段体"><svg><use href="#cube"/></svg></button>
      <button class="b" aria-label="长方体"><svg><use href="#box"/></svg></button>
      <button class="b" aria-label="楔体"><svg><use href="#wedge"/></svg></button>
      <button class="b" aria-label="圆锥体"><svg><use href="#cone"/></svg></button>
      <button class="b" aria-label="球体"><svg><use href="#sphere"/></svg></button>
      <button class="b" aria-label="圆柱体"><svg><use href="#cyl"/></svg></button>
      <button class="b" aria-label="圆环体"><svg><use href="#torus"/></svg></button>
      <button class="b" aria-label="棱锥面"><svg><use href="#cone"/></svg></button>
      <button class="b" aria-label="螺旋"><svg><use href="#helix"/></svg></button>
      <button class="b" aria-label="平面曲面"><svg><use href="#plane"/></svg></button>
      <i class="hsep"></i>
      <button class="b" aria-label="拉伸"><svg><use href="#extr"/></svg></button>
      <button class="b" aria-label="按住并拖动"><svg><use href="#push"/></svg></button>
      <button class="b" aria-label="扫掠"><svg><use href="#sweep"/></svg></button>
      <button class="b" aria-label="旋转"><svg><use href="#torus"/></svg></button>
      <button class="b" aria-label="放样"><svg><use href="#sweep"/></svg></button>
      <i class="hsep"></i>
      <button class="b" aria-label="并集"><svg><use href="#union"/></svg></button>
      <button class="b" aria-label="差集"><svg><use href="#subt"/></svg></button>
      <button class="b" aria-label="交集"><svg><use href="#inter"/></svg></button>
      <i class="hsep"></i>
      <button class="b" aria-label="三维移动"><svg><use href="#rot3"/></svg></button>
      <button class="b" aria-label="三维旋转"><svg><use href="#orb"/></svg></button>
      <button class="b" aria-label="三维对齐"><svg><use href="#walk"/></svg></button>
    </div>
  </div>
  <div class="side">
    <div class="palette draw" role="toolbar" aria-label="绘图">
      <i class="hgrip"></i>
      <button class="b" aria-label="直线"><svg><use href="#line"/></svg></button>
      <button class="b" aria-label="构造线"><svg><use href="#xline"/></svg></button>
      <button class="b" aria-label="多段线"><svg><use href="#pline"/></svg></button>
      <button class="b" aria-label="正多边形"><svg><use href="#poly"/></svg></button>
      <button class="b" aria-label="矩形"><svg><use href="#rect"/></svg></button>
      <button class="b" aria-label="圆弧"><svg><use href="#arc"/></svg></button>
      <button class="b" aria-label="圆"><svg><use href="#circle"/></svg></button>
      <button class="b" aria-label="修订云线"><svg><use href="#cloud"/></svg></button>
      <button class="b" aria-label="样条曲线"><svg><use href="#spline"/></svg></button>
      <button class="b" aria-label="椭圆"><svg><use href="#ell"/></svg></button>
      <button class="b" aria-label="椭圆弧"><svg><use href="#ellarc"/></svg></button>
      <button class="b" aria-label="插入块"><svg><use href="#insert"/></svg></button>
      <button class="b" aria-label="创建块"><svg><use href="#block"/></svg></button>
      <button class="b" aria-label="点"><svg><use href="#point"/></svg></button>
      <button class="b" aria-label="图案填充"><svg><use href="#hatch"/></svg></button>
      <button class="b" aria-label="渐变色"><svg><use href="#grad"/></svg></button>
      <button class="b" aria-label="面域"><svg><use href="#region"/></svg></button>
      <button class="b" aria-label="表格"><svg><use href="#table"/></svg></button>
      <button class="b" aria-label="多行文字"><svg><use href="#mtext"/></svg></button>
    </div>
  </div>

  <section class="view" aria-label="绘图窗口">
    <div class="canvas">
      <svg class="sketch" width="928" height="366" viewBox="0 0 928 366">
        <path d="M193 95.500h133.500v194h210.500v-142h191" fill="none" stroke="#c8c8c8"/>
        <path d="M706.500 154.500h4v4h-4z" fill="none" stroke="#e0e0e0"/>
      </svg>
      <output class="prompt">选择对象:</output>
      <svg class="ucs" width="80" height="80" viewBox="0 0 80 80">
        <path d="M8.500 64.500h6v6h-6zM11.500 64V34M15 68.500h32M11.500 26l-3 8h6zM55 68.500l-8-3v6z" fill="none" stroke="#c4c4c4"/>
        <text x="8" y="18">Y</text><text x="62" y="73">X</text>
      </svg>
    </div>
    <nav class="tabs" aria-label="布局">
      <button class="nav" aria-label="第一个"><svg width="13" height="11" viewBox="0 0 13 11"><path d="M3 2h1v7H3zM9 2v7L5 5.500z"/></svg></button>
      <button class="nav" aria-label="上一个"><svg width="13" height="11" viewBox="0 0 13 11"><path d="M8 2v7L4 5.500z"/></svg></button>
      <button class="nav" aria-label="下一个"><svg width="13" height="11" viewBox="0 0 13 11"><path d="M5 2v7l4-3.500z"/></svg></button>
      <button class="nav" aria-label="最后一个"><svg width="13" height="11" viewBox="0 0 13 11"><path d="M4 2v7l4-3.500zM9 2h1v7H9z"/></svg></button>
      <button class="tab on"><svg viewBox="0 0 32 11" width="32" height="11"><path d="M0 0l5 10.500h22L32 0z" fill="#000"/></svg><span>模型</span></button>
      <button class="tab"><svg viewBox="0 0 32 11" width="32" height="11"><path d="M0 0l4 10.500h22L31 0" fill="#f4f4f4" stroke="#111"/></svg><span>布局1</span></button>
      <button class="tab"><svg viewBox="0 0 32 11" width="32" height="11"><path d="M0 0l4 10.500h22L31 0" fill="#f4f4f4" stroke="#111"/></svg><span>布局2</span></button>
    </nav>
    <svg class="dots" width="34" height="16" viewBox="0 0 34 16"><ellipse cx="8" cy="9" rx="6" ry="8"/><ellipse cx="24" cy="11" rx="7" ry="9"/></svg>
    <aside class="mark">
      <svg width="36" height="38" viewBox="0 0 36 38" fill="none" stroke="#d3d7de" stroke-width="3" stroke-linecap="round">
        <path d="M3 7v22q1 7 8 6l19-11q6-5 0-10L13 4Q7 2 7 8v18q0 4 4 3"/>
        <path d="M14 13v11l7-5.500z" fill="#d3d7de" stroke="none"/><path d="M24 16v5" stroke-width="1.500"/>
      </svg>
      <p><strong>溜溜自学</strong><small>zixue.3D66.COM</small></p>
    </aside>
  </section>

  <div class="side">
    <div class="palette views" role="toolbar" aria-label="视图">
      <i class="hgrip"></i>
      <button class="b" aria-label="命名视图"><svg><use href="#named"/></svg></button>
      <i class="hsep"></i>
      <button class="b" aria-label="俯视"><svg><use href="#vtop"/></svg></button>
      <button class="b" aria-label="仰视"><svg><use href="#vbot"/></svg></button>
      <button class="b" aria-label="左视"><svg><use href="#vleft"/></svg></button>
      <button class="b" aria-label="右视"><svg><use href="#vright"/></svg></button>
      <button class="b" aria-label="前视"><svg><use href="#vfront"/></svg></button>
      <button class="b" aria-label="后视"><svg><use href="#vback"/></svg></button>
      <i class="hsep"></i>
      <button class="b" aria-label="西南等轴测"><svg><use href="#isw"/></svg></button>
      <button class="b" aria-label="东南等轴测"><svg><use href="#ise"/></svg></button>
      <button class="b" aria-label="东北等轴测"><svg><use href="#ine"/></svg></button>
      <button class="b" aria-label="西北等轴测"><svg><use href="#inw"/></svg></button>
      <i class="hsep"></i>
      <button class="b" aria-label="创建相机"><svg><use href="#cam"/></svg></button>
      <i class="hsep"></i>
      <button class="b" aria-label="上一个视图"><svg><use href="#pivot"/></svg></button>
    </div>
    <div class="palette styles" role="toolbar" aria-label="视觉样式">
      <i class="hgrip"></i>
      <button class="b" aria-label="二维线框"><svg><use href="#vs2d"/></svg></button>
      <i class="hsep"></i>
      <button class="b" aria-label="三维线框"><svg><use href="#wire"/></svg></button>
      <button class="b" aria-label="三维隐藏"><svg><use href="#hid"/></svg></button>
      <button class="b" aria-label="真实"><svg><use href="#real"/></svg></button>
      <button class="b" aria-label="概念"><svg><use href="#concept"/></svg></button>
      <i class="hsep"></i>
      <button class="b" aria-label="管理视觉样式"><svg><use href="#vsman"/></svg></button>
    </div>
  </div>
  <div class="side">
    <div class="palette modify" role="toolbar" aria-label="修改">
      <i class="hgrip"></i>
      <button class="b" aria-label="删除"><svg><use href="#erase"/></svg></button>
      <button class="b" aria-label="复制对象"><svg><use href="#copy"/></svg></button>
      <button class="b" aria-label="镜像"><svg><use href="#mirror"/></svg></button>
      <button class="b" aria-label="偏移"><svg><use href="#offset"/></svg></button>
      <button class="b" aria-label="阵列"><svg><use href="#array"/></svg></button>
      <button class="b" aria-label="移动"><svg><use href="#move"/></svg></button>
      <button class="b" aria-label="旋转"><svg><use href="#rotate"/></svg></button>
      <button class="b" aria-label="缩放"><svg><use href="#scale"/></svg></button>
      <button class="b" aria-label="拉伸"><svg><use href="#stretch"/></svg></button>
      <button class="b" aria-label="修剪"><svg><use href="#trim"/></svg></button>
      <button class="b" aria-label="延伸"><svg><use href="#extend"/></svg></button>
      <button class="b" aria-label="打断于点"><svg><use href="#breakp"/></svg></button>
      <button class="b" aria-label="打断"><svg><use href="#break"/></svg></button>
      <button class="b" aria-label="合并"><svg><use href="#join"/></svg></button>
      <button class="b" aria-label="倒角"><svg><use href="#chamfer"/></svg></button>
      <button class="b" aria-label="圆角"><svg><use href="#fillet"/></svg></button>
      <button class="b" aria-label="分解"><svg><use href="#explode"/></svg></button>
    </div>
    <div class="palette order" role="toolbar" aria-label="绘图次序">
      <i class="hgrip"></i>
      <button class="b" aria-label="前置"><svg><use href="#front"/></svg></button>
      <button class="b" aria-label="后置"><svg><use href="#back"/></svg></button>
      <button class="b" aria-label="置于对象之上"><svg><use href="#above"/></svg></button>
      <button class="b" aria-label="置于对象之下"><svg><use href="#under"/></svg></button>
    </div>
  </div>
</main>
<footer class="command"></footer>
</body>
</html>
```

FILE: styles.css
```css
* { box-sizing: border-box; }

body {
  margin: 0;
  min-height: 100vh;
  display: flex;
  flex-direction: column;
  overflow: hidden;
  background: #f0f0f0;
  font: 9px/12px "Liberation Serif", "Noto Sans CJK SC", serif;
  color: #666;
}

button, select {
  margin: 0;
  padding: 0;
  border: 0;
  background: none;
  font: inherit;
  color: inherit;
}

svg { display: block; flex: none; }
.defs { position: absolute; width: 0; height: 0; }
.glyph { font: bold 11px "Liberation Sans", sans-serif; fill: #222; }
.glyph.white { fill: #fff; }
.glyph.blue { fill: #1f4d80; }
.letter { font: 14px "Liberation Sans", sans-serif; fill: #222; }

/* Horizontal toolbars */
.bars {
  display: flex;
  flex-direction: column;
  gap: 1px;
  margin-top: -8px;
  border-bottom: 2px solid #9c9c9c;
}
.row { display: flex; gap: 3px; height: 20px; }
.row-standard { gap: 1px; height: 21px; margin-bottom: 1px; }
.row-dim { height: 19px; }
.bar {
  display: flex;
  align-items: center;
  padding: 0 2px;
  background: #f3f3f3;
  border-right: 1px solid #a8a8a8;
  border-bottom: 1px solid #b4b4b4;
  border-top: 1px solid #fafafa;
}
.row-props .bar:first-child { padding-left: 0; }

.b {
  display: flex;
  align-items: center;
  justify-content: center;
  flex: none;
  width: 17px;
  height: 16px;
}
.b svg { width: 16px; height: 16px; }
.b.slim { width: 11px; }

.sep {
  flex: none;
  width: 1px;
  height: 15px;
  margin: 0 1px 0 2px;
  background: #b4b4b4;
}
.grip {
  flex: none;
  width: 4px;
  height: 16px;
  margin-right: 2px;
  border: solid #bcbcbc;
  border-width: 0 1px;
}

.combo {
  display: flex;
  align-items: center;
  height: 16px;
  background: #efefef;
}
.combo select {
  flex: 1;
  min-width: 0;
  height: 16px;
  padding-left: 3px;
  appearance: none;
  line-height: 16px;
}
.chev {
  width: 14px;
  height: 16px;
  background: #fbfbfb;
  fill: none;
  stroke: #999;
  pointer-events: none;
}
.w-style { width: 73px; }
.w-space { width: 131px; }
.w-space select { padding-left: 8px; }
.w-color { width: 110px; }
.w-ltype { width: 119px; }
.w-weight { width: 93px; }
.w-plot { width: 88px; }
.w-layer { width: 222px; }
.w-layer select { padding-left: 2px; }
.swatch {
  width: 8px;
  height: 8px;
  margin-left: 2px;
  border: 1px solid #222;
  background: #fff;
}
.dash { width: 45px; height: 1px; margin-left: 3px; background: #444; }
.dash.short { width: 26px; }

/* Docked palettes */
.work { flex: 1; display: flex; min-width: 0; }
.side {
  flex: none;
  display: flex;
  flex-direction: column;
  gap: 2px;
  width: 20px;
}
.side-solids { width: 12px; align-items: flex-end; padding-right: 1px; }
.palette {
  display: flex;
  flex-direction: column;
  align-items: center;
  width: 19px;
  padding-bottom: 3px;
  background: #f5f5f5;
  border-right: 1px solid #b8b8b8;
  border-bottom: 1px solid #b0b0b0;
}
.palette .b { flex: 1; width: 18px; }
.hgrip {
  flex: none;
  width: 14px;
  height: 4px;
  margin: 1px 0;
  border: solid #b4b4b4;
  border-width: 1px 0;
}
.hsep {
  flex: none;
  width: 14px;
  height: 1px;
  margin: 1px 0 2px;
  background: #bcbcbc;
}
.tall { height: 364px; }
.draw { height: 318px; }
.views { height: 238px; }
.styles { height: 119px; }
.modify { height: 286px; }
.order { height: 76px; }

/* Drawing window */
.view {
  position: relative;
  flex: 1;
  min-width: 0;
  display: flex;
  flex-direction: column;
}
.canvas {
  position: relative;
  flex: 1;
  overflow: hidden;
  background: #000;
}
.sketch { position: absolute; top: 0; left: 0; }
.prompt {
  position: absolute;
  left: 720px;
  top: 168px;
  padding: 0 6px 0 2px;
  border: 1px solid #b4b4cc;
  background: #1c1c66;
  color: #d8d8e8;
  line-height: 15px;
}
.ucs { position: absolute; left: 0; bottom: 0; }
.ucs text { font: 12px "Liberation Sans", sans-serif; fill: #c4c4c4; }

.tabs { display: flex; height: 11px; background: #f0f0f0; }
.nav {
  width: 14px;
  background: #f8f8f8;
  border-right: 1px solid #d0d0d0;
  border-bottom: 1px solid #c8c8c8;
}
.tab {
  position: relative;
  width: 30px;
  padding-right: 1px;
  line-height: 11px;
  color: #222;
}
.tab.on { color: #ddd; }
.tab svg { position: absolute; left: 0; top: 0; }
.tab span { position: relative; }

.dots { position: absolute; right: 86px; bottom: 79px; fill: #b9bab8; }
.mark {
  position: absolute;
  right: 15px;
  bottom: -1px;
  display: flex;
  align-items: center;
  gap: 12px;
  width: 180px;
  height: 85px;
  padding-left: 14px;
  background: #223056;
  color: #d3d7de;
}
.mark p { margin: 0; }
.mark strong {
  display: block;
  font: bold 26px/28px "Noto Sans CJK SC", sans-serif;
}
.mark small {
  display: block;
  padding-top: 2px;
  font: 12px/14px "DejaVu Sans", sans-serif;
}

.command {
  height: 9px;
  margin-top: 4px;
  border: solid #a0a0a0;
  border-width: 2px 0 1px;
}
```
